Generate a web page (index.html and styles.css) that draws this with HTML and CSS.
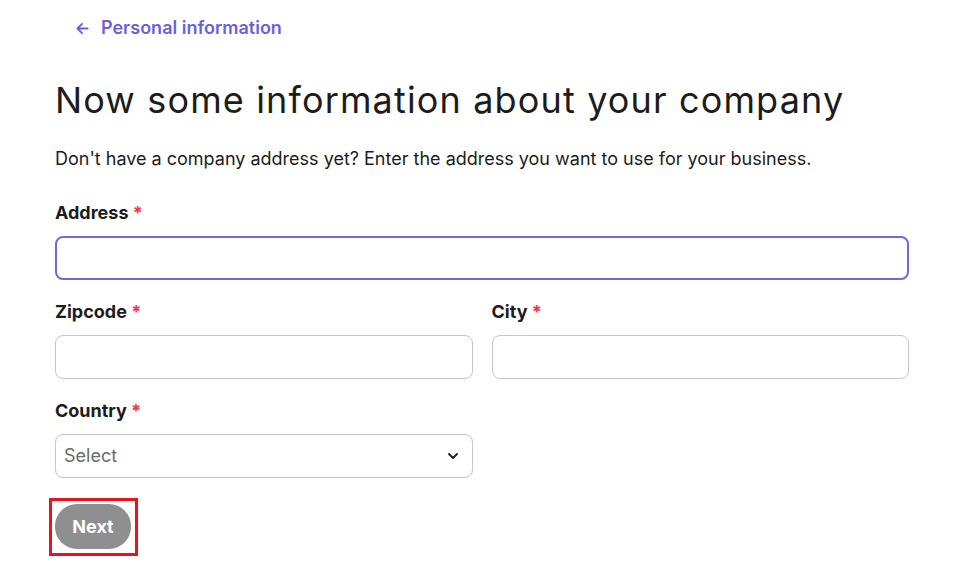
FILE: index.html
```html
<!DOCTYPE html>
<html lang="en">
<head>
<meta charset="utf-8">
<link rel="stylesheet" href="styles.css">
</head>
<body>
<main class="page">
  <a class="back" href="#">
    <svg class="back-icon" width="13" height="13" viewBox="0 0 14 14" fill="none" stroke="currentColor" stroke-width="2" stroke-linecap="round" stroke-linejoin="round"><path d="M12.5 7H1.5M6.5 2L1.5 7l5 5"/></svg>
    <span>Personal information</span>
  </a>
  <h1 class="title">Now some information about your company</h1>
  <p class="intro">Don't have a company address yet? Enter the address you want to use for your business.</p>
  <form class="form">
    <div class="field">
      <label class="label">Address <span class="req">*</span></label>
      <input class="input input-focus" type="text">
    </div>
    <div class="row">
      <div class="field">
        <label class="label">Zipcode <span class="req">*</span></label>
        <input class="input" type="text">
      </div>
      <div class="field">
        <label class="label">City <span class="req">*</span></label>
        <input class="input" type="text">
      </div>
    </div>
    <div class="row">
      <div class="field">
        <label class="label">Country <span class="req">*</span></label>
        <div class="select">
          <span class="select-text">Select</span>
          <svg class="chev" width="12" height="8" viewBox="0 0 12 8" fill="none" stroke="#1f2430" stroke-width="2" stroke-linecap="round" stroke-linejoin="round"><path d="M2 2l4 4 4-4"/></svg>
        </div>
      </div>
      <div></div>
    </div>
    <div class="actions">
      <span class="btn-frame"><button class="btn" type="button">Next</button></span>
    </div>
  </form>
</main>
</body>
</html>
```
FILE: styles.css
```css
* { box-sizing: border-box; }
html, body { margin: 0; padding: 0; background: #fff; }
body { font-family: Inter, "Noto Sans", sans-serif; color: #1c1c1c; }
.page { padding: 18px 48px 0 55px; }
.back {
  display: inline-flex; align-items: center; gap: 12px;
  margin-left: 21px; color: #6b5fe0; text-decoration: none;
  font-size: 18px; font-weight: 600; height: 20px; line-height: 20px;
}
.back-icon { width: 13px; height: 13px; }
.title {
  margin: 39px 0 0; font-size: 36px; font-weight: 400; letter-spacing: 1.15px;
  line-height: 44px; color: #1c1c1c;
}
.intro { margin: 25px 0 0; font-size: 18px; line-height: 24px; color: #1c1c1c; }
.form { margin-top: 31px; display: flex; flex-direction: column; gap: 21px; }
.field { display: flex; flex-direction: column; gap: 12px; }
.label { font-size: 18px; font-weight: 700; line-height: 22px; color: #1c1c1c; }
.req { color: #f0364f; }
.row { display: grid; grid-template-columns: 1fr 1fr; gap: 19px; }
.input {
  height: 44px; border: 1px solid #c6c6c6; border-radius: 8px; background: #fff;
  font: inherit; padding: 0 10px; outline: none;
}
.input-focus { border: 2px solid #7467e6; }
.select {
  height: 44px; border: 1px solid #c6c6c6; border-radius: 8px; background: #fff;
  display: flex; align-items: center; justify-content: space-between; padding: 0 13px 0 8px;
}
.select-text { font-size: 18px; color: #6b6b6b; }
.actions { margin-left: -6px; margin-top: -1px; }
.btn-frame { display: inline-block; border: 3px solid #e8141c; padding: 3px 4px 4px 3px; }
.btn {
  display: block;
  background: #8f8f8f; color: #fff; border: none; border-radius: 22px;
  width: 76px; height: 45px; font: inherit; font-size: 18px; font-weight: 700;
}
```
